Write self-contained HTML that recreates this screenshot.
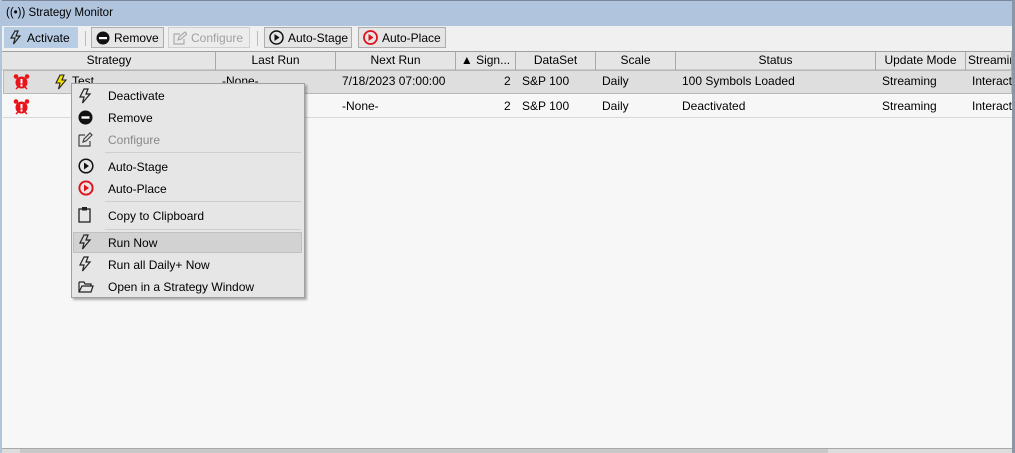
<!DOCTYPE html>
<html><head><style>
*{margin:0;padding:0;box-sizing:border-box}
body{width:1015px;height:453px;overflow:hidden;background:#f7f7f7;font-family:"Liberation Sans",sans-serif;font-size:12px;color:#000;position:relative}
.a{position:absolute;white-space:nowrap}
.btn{position:absolute;top:27px;height:21px;border:1px solid #adadad;background:#e5e5e5;display:flex;align-items:center;padding-left:4px;gap:4px;font-size:12px}
.hd{position:absolute;top:52px;height:18px;border-right:1px solid #a8a8a8;text-align:center;line-height:17px;font-size:12px}
.mi{position:absolute;left:108px;font-size:12px}
.ic{position:absolute;left:78px}
.sep{position:absolute;left:105px;width:196px;height:1px;background:#cfcfcf}
</style></head><body>
<div class="a" style="left:0;top:0;width:1015px;height:26px;background:#b0c4de;border-top:1px solid #7a8699"></div>
<div class="a" style="left:0;top:0;width:2px;height:453px;background:#b0c4de"></div>
<div class="a" style="left:1012px;top:0;width:3px;height:453px;background:#8a97a8"></div>
<div class="a" style="left:6px;top:7px;font-size:11.5px">((•)) Strategy Monitor</div>
<div class="a" style="left:2px;top:26px;width:1010px;height:25px;background:#f0f0f0"></div>
<div class="btn" style="left:4px;width:74px;background:#b8cce4;border-color:#b8cce4">
<svg width="14" height="15" viewBox="0 0 14 15"><path d="M6 1 L2 8 H6 L4.5 14 L11 6 H7 L9 1 Z" fill="none" stroke="#222" stroke-width="1.2"/></svg>Activate</div>
<div class="a" style="left:85px;top:31px;width:1px;height:15px;background:#bbb"></div>
<div class="btn" style="left:91px;width:73px"><svg width="14" height="14"><circle cx="7" cy="7" r="6.5" fill="#111"/><rect x="3" y="6" width="8" height="2.2" fill="#fff"/></svg>Remove</div>
<div class="btn" style="left:168px;width:82px;color:#a0a0a0;border-color:#d0d0d0;background:#ececec"><svg width="14" height="14"><path d="M1 3h6M1 3v10h10v-5" fill="none" stroke="#aaa" stroke-width="1.2"/><path d="M5 9l1-3 6-5 2 2-6 5z" fill="none" stroke="#aaa" stroke-width="1.2"/></svg>Configure</div>
<div class="a" style="left:257px;top:31px;width:1px;height:15px;background:#bbb"></div>
<div class="btn" style="left:264px;width:88px"><svg width="15" height="15"><circle cx="7.5" cy="7.5" r="6.5" fill="none" stroke="#111" stroke-width="1.5"/><path d="M5.5 4l5 3.5-5 3.5z" fill="#111"/></svg>Auto-Stage</div>
<div class="btn" style="left:358px;width:88px"><svg width="15" height="15"><circle cx="7.5" cy="7.5" r="6.5" fill="none" stroke="#e0101a" stroke-width="1.8"/><path d="M5.5 4l5 3.5-5 3.5z" fill="#e0101a"/></svg>Auto-Place</div>
<div class="a" style="left:2px;top:51px;width:1010px;height:1px;background:#a0a0a0"></div>
<div class="a" style="left:2px;top:52px;width:1010px;height:18px;background:#e5e5e5;border-bottom:1px solid #c8c8c8"></div>
<div class="hd" style="left:3px;width:213px">Strategy</div>
<div class="hd" style="left:216px;width:120px">Last Run</div>
<div class="hd" style="left:336px;width:120px">Next Run</div>
<div class="hd" style="left:456px;width:60px">▲ Sign...</div>
<div class="hd" style="left:516px;width:80px">DataSet</div>
<div class="hd" style="left:596px;width:80px">Scale</div>
<div class="hd" style="left:676px;width:200px">Status</div>
<div class="hd" style="left:876px;width:90px">Update Mode</div>
<div class="hd" style="left:966px;width:46px;text-align:left;padding-left:2px;overflow:hidden">Streaming</div>
<div class="a" style="left:3px;top:70px;width:1009px;height:24px;background:#dedede;border:1px solid #b8b8b8"></div>
<div class="a" style="left:3px;top:94px;width:1009px;height:24px;border-bottom:1px solid #d8d8d8"></div>
<svg class="a" style="left:13px;top:73px" width="17" height="17"><circle cx="8.5" cy="9.5" r="6" fill="#e8141c"/><circle cx="3" cy="3.5" r="2.3" fill="#e8141c"/><circle cx="14" cy="3.5" r="2.3" fill="#e8141c"/><rect x="7.5" y="6" width="2" height="4.5" fill="#fff"/><rect x="7.5" y="11.5" width="2" height="2" fill="#fff"/><path d="M3 16l2-2M14 16l-2-2" stroke="#e8141c" stroke-width="1.5"/></svg>
<svg class="a" style="left:13px;top:98px" width="17" height="17"><circle cx="8.5" cy="9.5" r="6" fill="#e8141c"/><circle cx="3" cy="3.5" r="2.3" fill="#e8141c"/><circle cx="14" cy="3.5" r="2.3" fill="#e8141c"/><rect x="7.5" y="6" width="2" height="4.5" fill="#fff"/><rect x="7.5" y="11.5" width="2" height="2" fill="#fff"/><path d="M3 16l2-2M14 16l-2-2" stroke="#e8141c" stroke-width="1.5"/></svg>
<svg class="a" style="left:55px;top:74px" width="12" height="16" viewBox="0 0 12 16"><path d="M5 1 L1 9 H5 L3.5 15 L11 6 H7 L9 1 Z" fill="#f5e000" stroke="#222" stroke-width="1.1"/></svg>
<div class="a" style="left:72px;top:74px">Test</div>
<div class="a" style="left:222px;top:74px">-None-</div>
<div class="a" style="left:342px;top:74px">7/18/2023 07:00:00</div>
<div class="a" style="left:342px;top:99px">-None-</div>
<div class="a" style="left:504px;top:74px">2</div><div class="a" style="left:504px;top:99px">2</div>
<div class="a" style="left:522px;top:74px">S&amp;P 100</div><div class="a" style="left:522px;top:99px">S&amp;P 100</div>
<div class="a" style="left:602px;top:74px">Daily</div><div class="a" style="left:602px;top:99px">Daily</div>
<div class="a" style="left:682px;top:74px">100 Symbols Loaded</div><div class="a" style="left:682px;top:99px">Deactivated</div>
<div class="a" style="left:882px;top:74px">Streaming</div><div class="a" style="left:882px;top:99px">Streaming</div>
<div class="a" style="left:972px;top:74px;width:40px;overflow:hidden">Interactive</div><div class="a" style="left:972px;top:99px;width:40px;overflow:hidden">Interactive</div>
<div class="a" style="left:2px;top:448px;width:1010px;height:5px;background:#dcdcdc;border-top:1px solid #a8a8a8"></div>
<div class="a" style="left:20px;top:449px;width:808px;height:4px;background:#c8c8c8"></div>
<!-- menu -->
<div class="a" style="left:71px;top:83px;width:234px;height:215px;background:#e6e6e6;border:1px solid #a0a0a0;box-shadow:2px 2px 2px rgba(0,0,0,.3)"></div>
<div class="a" style="left:73px;top:232px;width:229px;height:21px;background:#d2d2d2;border:1px solid #c0c0c0"></div>
<svg class="ic" style="top:88px" width="14" height="16" viewBox="0 0 14 16"><path d="M6 1 L2 9 H6 L4.5 15 L12 6 H8 L10 1 Z" fill="none" stroke="#222" stroke-width="1.2"/></svg>
<div class="mi" style="top:89px">Deactivate</div>
<svg class="ic" style="top:110px" width="15" height="15"><circle cx="7.5" cy="7.5" r="7" fill="#111"/><rect x="3.5" y="6.3" width="8" height="2.4" fill="#fff"/></svg>
<div class="mi" style="top:111px">Remove</div>
<svg class="ic" style="top:132px" width="15" height="15"><path d="M1 3h6M1 3v11h11v-5" fill="none" stroke="#444" stroke-width="1.2"/><path d="M5 10l1-3 6-6 2 2-6 6z" fill="none" stroke="#444" stroke-width="1.2"/></svg>
<div class="mi" style="top:133px;color:#888">Configure</div>
<div class="sep" style="top:152px"></div>
<svg class="ic" style="top:158px" width="16" height="16"><circle cx="8" cy="8" r="6.8" fill="none" stroke="#111" stroke-width="1.5"/><path d="M6 4.5l5 3.5-5 3.5z" fill="#111"/></svg>
<div class="mi" style="top:160px">Auto-Stage</div>
<svg class="ic" style="top:180px" width="16" height="16"><circle cx="8" cy="8" r="6.6" fill="none" stroke="#e0101a" stroke-width="1.9"/><path d="M6 4.5l5 3.5-5 3.5z" fill="#e0101a"/></svg>
<div class="mi" style="top:182px">Auto-Place</div>
<div class="sep" style="top:201px"></div>
<svg class="ic" style="top:206px" width="14" height="17"><rect x="1" y="3" width="11" height="13" fill="none" stroke="#222" stroke-width="1.3"/><rect x="4" y="1" width="5" height="3.5" fill="#222"/></svg>
<div class="mi" style="top:209px">Copy to Clipboard</div>
<div class="sep" style="top:229px"></div>
<svg class="ic" style="top:234px" width="14" height="16" viewBox="0 0 14 16"><path d="M6 1 L2 9 H6 L4.5 15 L12 6 H8 L10 1 Z" fill="none" stroke="#222" stroke-width="1.2"/></svg>
<div class="mi" style="top:236px">Run Now</div>
<svg class="ic" style="top:256px" width="14" height="16" viewBox="0 0 14 16"><path d="M6 1 L2 9 H6 L4.5 15 L12 6 H8 L10 1 Z" fill="none" stroke="#222" stroke-width="1.2"/></svg>
<div class="mi" style="top:258px">Run all Daily+ Now</div>
<svg class="ic" style="top:280px" width="16" height="13"><path d="M1 2h5l1 2h6v2M1 2v10h12l2-6H4l-3 6" fill="none" stroke="#222" stroke-width="1.2"/></svg>
<div class="mi" style="top:280px">Open in a Strategy Window</div>
</body></html>
